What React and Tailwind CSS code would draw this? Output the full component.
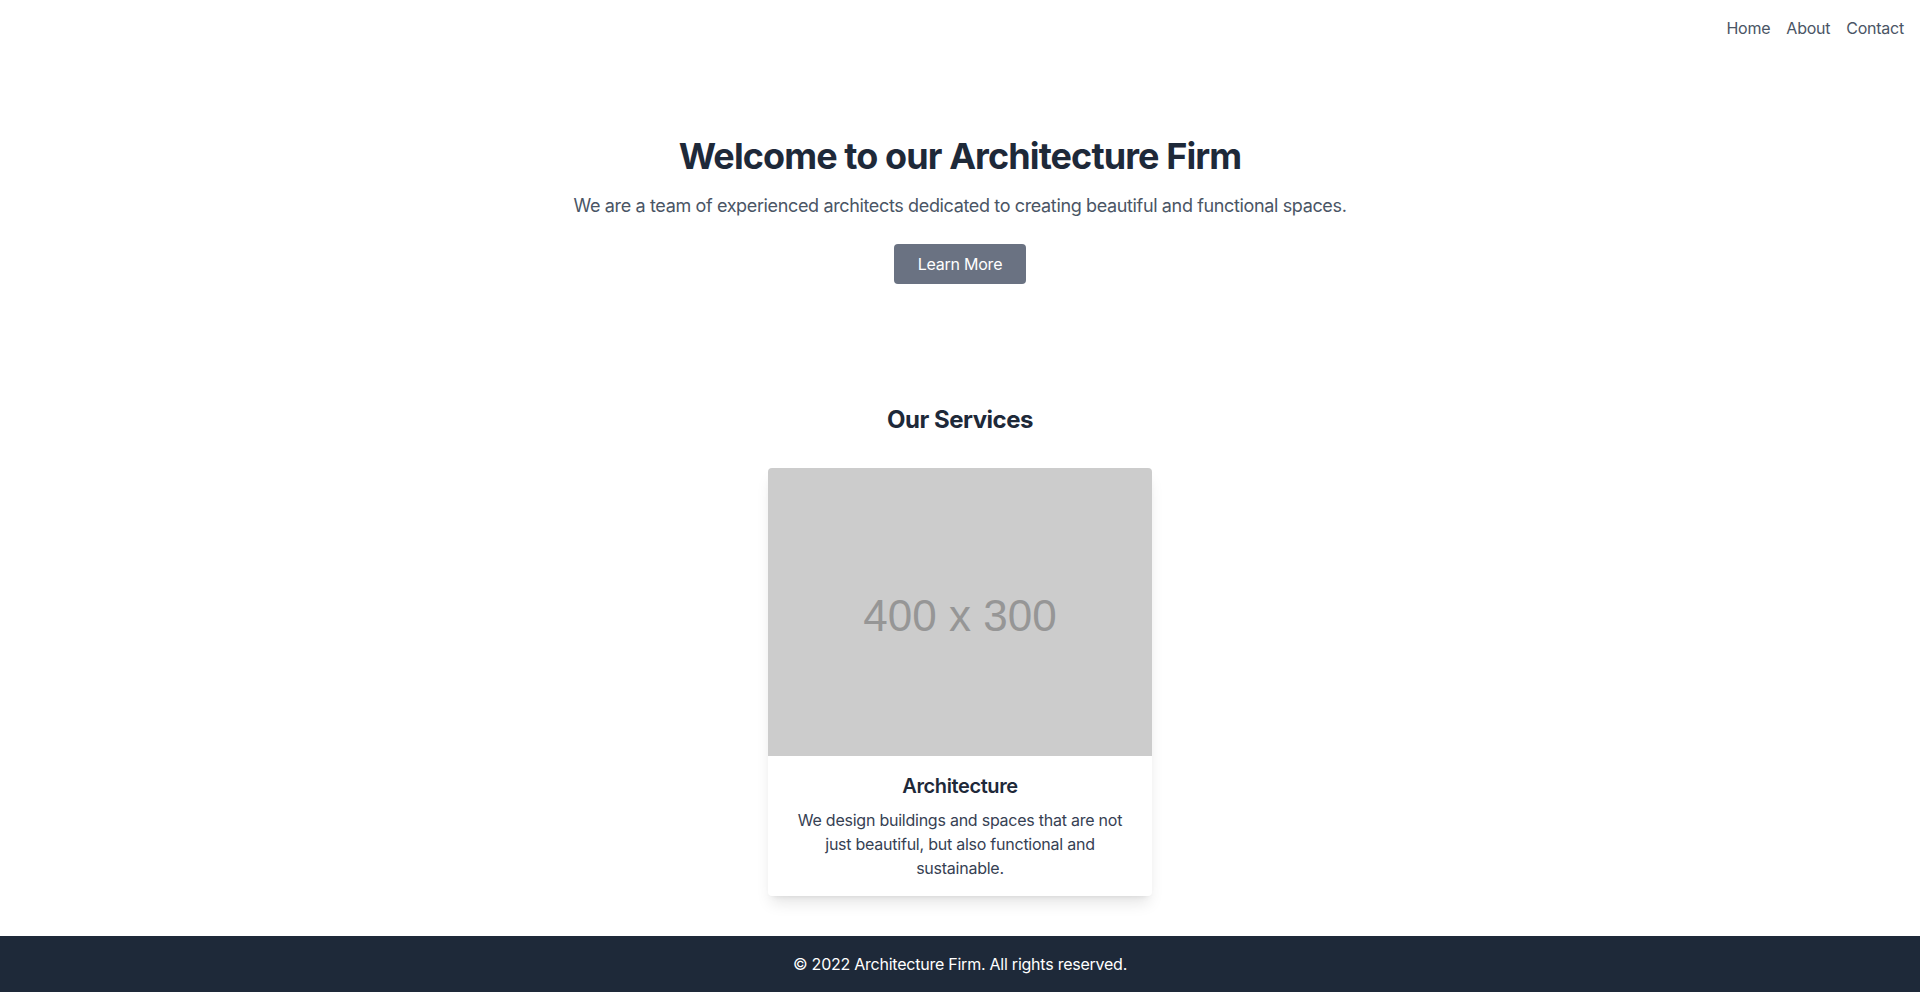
import React from 'react';

const Navbar = () => {
  return (
    <nav className="flex justify-end p-4">
      <ul className="flex space-x-4 text-gray-600">
        <li><a href="#">Home</a></li>
        <li><a href="#">About</a></li>
        <li><a href="#">Contact</a></li>
      </ul>
    </nav>
  );
};

const ServiceCard = ({ title, description }) => {
  return (
    <div className="w-96 bg-white rounded shadow-lg overflow-hidden">
      {/* Placeholder image */}
      <div className="h-72 bg-[#cccccc] flex items-center justify-center pt-2">
        <span className="text-[44px] tracking-normal text-[#969696] font-['Liberation_Sans',Arial,sans-serif]">400 x 300</span>
      </div>
      <div className="p-4 text-center">
        <h3 className="text-xl font-semibold text-gray-800 mb-2 tracking-[-0.02em]">{title}</h3>
        <p className="text-gray-700">{description}</p>
      </div>
    </div>
  );
};

const App = () => {
  return (
    <div className="bg-white font-['Inter',sans-serif] tracking-[-0.015em]">
      <Navbar />

      {/* Hero */}
      <section className="py-20 text-center">
        <h1 className="text-4xl font-bold text-gray-800 mb-4 tracking-[-0.025em]">Welcome to our Architecture Firm</h1>
        <p className="text-lg text-gray-600 mb-6 tracking-[-0.02em]">
          We are a team of experienced architects dedicated to creating beautiful and functional spaces.
        </p>
        <button className="bg-gray-500 text-white px-6 py-2 rounded">Learn More</button>
      </section>

      {/* Services */}
      <section className="py-10">
        <h2 className="text-2xl font-bold text-gray-800 text-center mb-8 tracking-[-0.02em]">Our Services</h2>
        <div className="flex justify-center">
          <ServiceCard
            title="Architecture"
            description="We design buildings and spaces that are not just beautiful, but also functional and sustainable."
          />
        </div>
      </section>

      <footer className="bg-gray-800 text-white text-center py-4">
        <p>&copy; 2022 Architecture Firm. All rights reserved.</p>
      </footer>
    </div>
  );
};

export default App;
